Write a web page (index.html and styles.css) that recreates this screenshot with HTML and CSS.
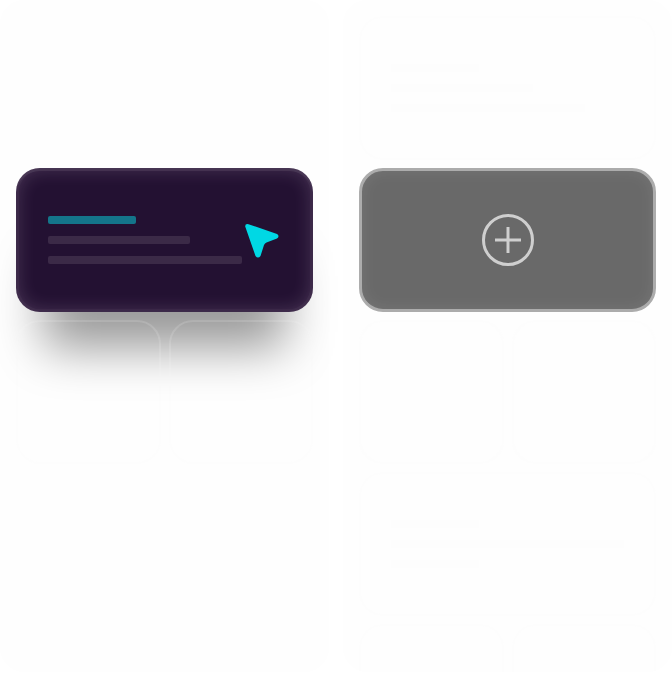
FILE: index.html
```html
<!DOCTYPE html>
<html lang="en">
<head>
<meta charset="utf-8">
<meta name="viewport" content="width=device-width, initial-scale=1">
<title>Layout cards</title>
<link rel="stylesheet" href="styles.css">
</head>
<body>
<main class="board">
  <section class="panel">
    <div class="card wide"></div>
    <article class="card card-active wide">
      <div class="lines">
        <span class="line line-accent short"></span>
        <span class="line medium"></span>
        <span class="line long"></span>
      </div>
      <svg class="pointer" viewBox="1 0 36 36" aria-hidden="true">
        <path d="M4.500 2.200 L33 12 Q36 14 33 16.500 L22.500 20.500 Q20.800 21.300 20 23 L16.500 34 Q14 37 11.500 34 L1.200 4.500 Q1 1.500 4.500 2.200Z" fill="#00d8e4"/>
      </svg>
    </article>
    <div class="card card-glass"></div>
    <div class="card card-glass"></div>
  </section>
  <section class="panel panel-ghost">
    <div class="card card-ghost wide">
      <div class="lines">
        <span class="line short"></span>
        <span class="line medium"></span>
        <span class="line long"></span>
      </div>
    </div>
    <button class="card card-add wide" type="button" aria-label="Add">
      <svg class="plus" viewBox="0 0 52 52" aria-hidden="true">
        <g fill="none" stroke="#cfcfcf" stroke-width="3">
          <circle cx="26" cy="26" r="24.500"/>
          <path d="M26 13V39M13 26H39"/>
        </g>
      </svg>
    </button>
    <div class="card card-ghost"></div>
    <div class="card card-ghost"></div>
    <div class="card card-ghost wide">
      <div class="lines">
        <span class="line short"></span>
        <span class="line full"></span>
        <span class="line short"></span>
      </div>
    </div>
    <div class="card card-ghost"></div>
    <div class="card card-ghost"></div>
  </section>
</main>
</body>
</html>
```
FILE: styles.css
```css
* { box-sizing: border-box; }

body {
  margin: 0;
  background: #fff;
  font-family: "Liberation Sans", sans-serif;
}

.board {
  display: grid;
  grid-template-columns: 1fr 1fr;
  gap: 14px;
  height: 672px;
}

.panel {
  display: grid;
  grid-template-columns: 1fr 1fr;
  grid-auto-rows: 144px;
  gap: 8px;
  padding: 16px;
  border-radius: 24px;
  background: #fefefe;
  min-height: 0;
}

.panel-ghost { overflow: hidden; }

.card {
  display: flex;
  align-items: center;
  justify-content: space-between;
  padding: 0 32px;
  border: 0;
  border-radius: 24px;
}

.wide { grid-column: 1 / -1; }

.card-ghost { border: 2px solid #fdfdfd; padding: 0 30px; }

.card-active {
  position: relative;
  background: #231132;
  box-shadow:
    inset 0 0 0 3px rgba(255, 255, 255, 0.03),
    inset 0 3px 0 rgba(255, 255, 255, 0.05),
    inset 0 0 20px rgba(255, 225, 255, 0.2),
    0 64px 48px -28px rgba(0, 0, 0, 0.4);
}

.card-glass {
  position: relative;
  border: 2px solid rgba(248, 248, 248, 0.15);
}

.card-add {
  justify-content: center;
  border: 3px solid #acacac;
  background: #696969;
  box-shadow: inset 0 0 16px rgba(255, 255, 255, 0.09);
}

.lines {
  display: flex;
  flex: 1;
  flex-direction: column;
  gap: 12px;
}

.line {
  height: 8px;
  border-radius: 2px;
  background: #fdfdfd;
}

.card-active .line { background: #3b2a47; }
.card-active .line-accent { background: #14758a; }

.short { width: 88px; }
.medium { width: 142px; }
.long { width: 194px; }
.full { width: 100%; }

.pointer {
  flex: none;
  width: 36px;
  height: 36px;
}

.plus {
  width: 52px;
  height: 52px;
}
```
